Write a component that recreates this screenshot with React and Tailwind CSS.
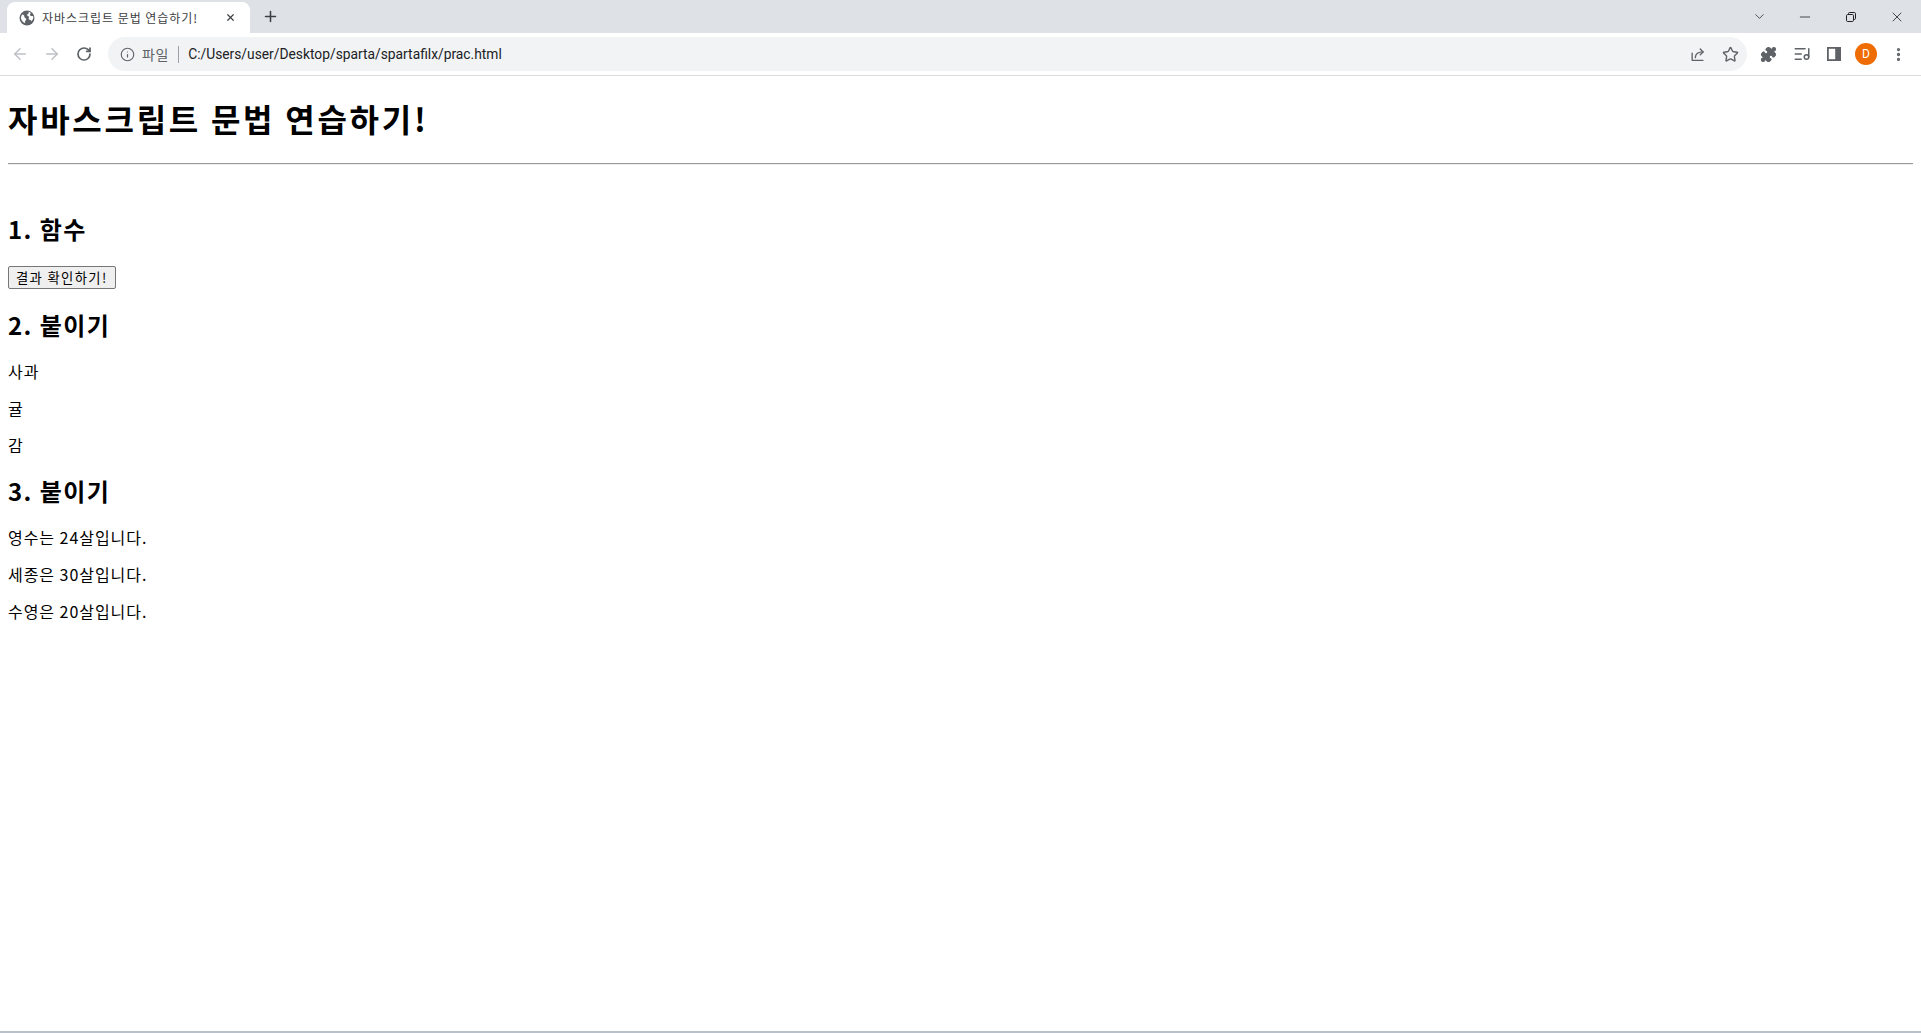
import { ArrowLeft, ArrowRight, RotateCw, Info, Star, Puzzle, ListMusic, EllipsisVertical, ChevronDown, Minus, X, Plus } from 'lucide-react';

function GlobeIcon() {
  return (
    <svg width="16" height="16" viewBox="0 0 16 16">
      <circle cx="8" cy="8" r="7.5" fill="#5f6368" />
      <path d="M3.2 4.6c1.4.2 2.3.9 2.1 2-.2 1 .9 1.3 1.6 1.9.6.6.2 1.6-.5 2.3-.6.6-.5 1.5-.1 2.5-2-.6-3.7-2.3-4.2-4.5-.2-1.5.2-3 1.1-4.2z" fill="#fff" />
      <path d="M9.6 1.7c.9.3 1.7.8 2.4 1.5-.8.4-1.300 1-1 1.8.3.9 1.2 1.2 2.1 1.1.7-.1 1.2.3 1.3 1-.1 1.6-.8 3.1-1.9 4.2-.3-.9-.9-1.5-1.8-1.6-.9-.2-1.3-.9-.9-1.7.4-.8 0-1.6-.8-1.9-.8-.3-1.1-1.2-.6-1.9.3-.4.8-.6 1.2-.5z" fill="#fff" />
    </svg>
  );
}

function ShareIcon() {
  return (
    <svg width="18" height="18" viewBox="0 0 20 20" fill="none" stroke="#5f6368" strokeWidth="1.5" strokeLinecap="round" strokeLinejoin="round">
      <path d="M3.5 9v8h12" />
      <path d="M7 14c.3-4 3.2-6.3 8.5-6.3" />
      <path d="M12.5 4.5l3.2 3.2-3.2 3.2" />
    </svg>
  );
}

function SidePanelIcon() {
  return (
    <svg width="16" height="16" viewBox="0 0 16 16">
      <rect x="1" y="1" width="14" height="14" fill="#5f6368" />
      <rect x="2.8" y="2.8" width="6.4" height="10.4" fill="#fff" />
    </svg>
  );
}

function RestoreIcon() {
  return (
    <svg width="12" height="12" viewBox="0 0 12 12" fill="none" stroke="#202124" strokeWidth="1">
      <rect x="1.5" y="3.5" width="7" height="7" rx="1.2" />
      <path d="M3.5 3.5V2.7a1.2 1.2 0 0 1 1.2-1.2h4.6a1.2 1.2 0 0 1 1.2 1.2v4.6a1.2 1.2 0 0 1-1.2 1.2h-.8" />
    </svg>
  );
}

function TabStrip() {
  return (
    <div className="h-[33px] bg-[#dee1e6] flex items-end pl-[7px]">
      <div className="h-[31px] w-[243px] bg-white rounded-t-lg flex items-center pl-[12px] pr-[10px]">
        <GlobeIcon />
        <span className="ml-[7px] flex-1 text-[12px] tracking-[0.08em] text-[#3c4043] font-['Noto_Sans_CJK_KR',sans-serif] leading-4 whitespace-nowrap">
          자바스크립트 문법 연습하기!
        </span>
        <span className="w-5 h-5 flex items-center justify-center text-[#3c4043]">
          <X size={11} strokeWidth={2.6} />
        </span>
      </div>
      <div className="h-[33px] w-7 ml-[6px] flex items-center justify-center text-[#3c4043]">
        <Plus size={17} strokeWidth={2.2} />
      </div>
      <div className="ml-auto h-[33px] flex items-center pr-px text-[#202124]">
        <span className="w-[46px] flex justify-center"><ChevronDown size={15} strokeWidth={1.2} /></span>
        <span className="w-[46px] flex justify-center"><Minus size={16} strokeWidth={1.2} /></span>
        <span className="w-[46px] flex justify-center"><RestoreIcon /></span>
        <span className="w-[46px] flex justify-center"><X size={16} strokeWidth={1.2} /></span>
      </div>
    </div>
  );
}

function Toolbar() {
  return (
    <div className="h-[43px] bg-white border-b border-[#dadce0] flex items-center pl-[4px] pr-[7px]">
      <span className="w-8 flex justify-center text-[#bdc1c6]"><ArrowLeft size={18} strokeWidth={2} /></span>
      <span className="w-8 flex justify-center text-[#bdc1c6]"><ArrowRight size={18} strokeWidth={2} /></span>
      <span className="w-8 flex justify-center text-[#5f6368]"><RotateCw size={16} strokeWidth={2.6} /></span>
      <div className="ml-2 flex-1 h-[34px] rounded-full bg-[#f1f3f4] flex items-center pl-3 pr-px">
        <span className="text-[#5f6368]"><Info size={15} strokeWidth={1.8} /></span>
        <span className="ml-[7px] text-[14px] tracking-[0.05em] text-[#5f6368] font-['Noto_Sans_CJK_KR',sans-serif] leading-5">파일</span>
        <span className="ml-[9px] w-px h-[17px] bg-[#9aa0a6]" />
        <span className="ml-[9px] text-[13.8px] text-[#202124] font-['Roboto',sans-serif] leading-5">
          C:/Users/user/Desktop/sparta/spartafilx/prac.html
        </span>
        <span className="ml-auto w-8 flex justify-center"><ShareIcon /></span>
        <span className="w-8 flex justify-center text-[#5f6368]"><Star size={17} strokeWidth={2} /></span>
      </div>
      <span className="ml-[5px] w-8 flex justify-center text-[#5f6368]">
        <Puzzle size={17} fill="#5f6368" strokeWidth={1.5} />
      </span>
      <span className="ml-[2px] w-8 flex justify-center text-[#5f6368]"><ListMusic size={18} strokeWidth={2} /></span>
      <span className="w-8 flex justify-center"><SidePanelIcon /></span>
      <span className="w-8 flex justify-center">
        <span className="w-[22px] h-[22px] rounded-full bg-[#ef6c00] text-white text-[12px] flex items-center justify-center font-['Roboto',sans-serif]">D</span>
      </span>
      <span className="w-8 flex justify-center text-[#5f6368]"><EllipsisVertical size={17} strokeWidth={2.6} /></span>
    </div>
  );
}

export default function App() {
  const fruits = ['사과', '귤', '감'];
  const people = ['영수는 24살입니다.', '세종은 30살입니다.', '수영은 20살입니다.'];

  return (
    <div className="h-[1033px] w-full overflow-hidden flex flex-col bg-white">
      <TabStrip />
      <Toolbar />

      <main className="flex-1 px-2 text-black font-['Noto_Sans_CJK_KR',sans-serif]">
        <h1 className="mt-[21px] text-[32px] font-bold leading-[42px] tracking-[0.085em]">자바스크립트 문법 연습하기!</h1>
        <hr className="mt-[24px] h-0 border-0 border-t border-b border-t-[#9a9a9a] border-b-[#eeeeee]" />

        <h2 className="mt-[48px] text-2xl font-bold leading-8 tracking-[0.06em]">1. 함수</h2>
        <div className="mt-[19px]">
          <button className="h-[23px] px-[7px] text-[13.33px] leading-none tracking-[0.1em] bg-[#efefef] border border-[#767676] rounded-[2px]">
            결과 확인하기!
          </button>
        </div>

        <h2 className="mt-[20px] text-2xl font-bold leading-8 tracking-[0.06em]">2. 붙이기</h2>
        <div className="mt-5 flex flex-col gap-4">
          {fruits.map((f) => (
            <p key={f} className="text-base leading-[21px] tracking-[0.06em]">{f}</p>
          ))}
        </div>

        <h2 className="mt-[19px] text-2xl font-bold leading-8 tracking-[0.06em]">3. 붙이기</h2>
        <div className="mt-5 flex flex-col gap-4">
          {people.map((p) => (
            <p key={p} className="text-base leading-[21px] tracking-[0.06em]">{p}</p>
          ))}
        </div>
      </main>

      <div className="h-[2px] bg-[#b9c0c9]" />
    </div>
  );
}
